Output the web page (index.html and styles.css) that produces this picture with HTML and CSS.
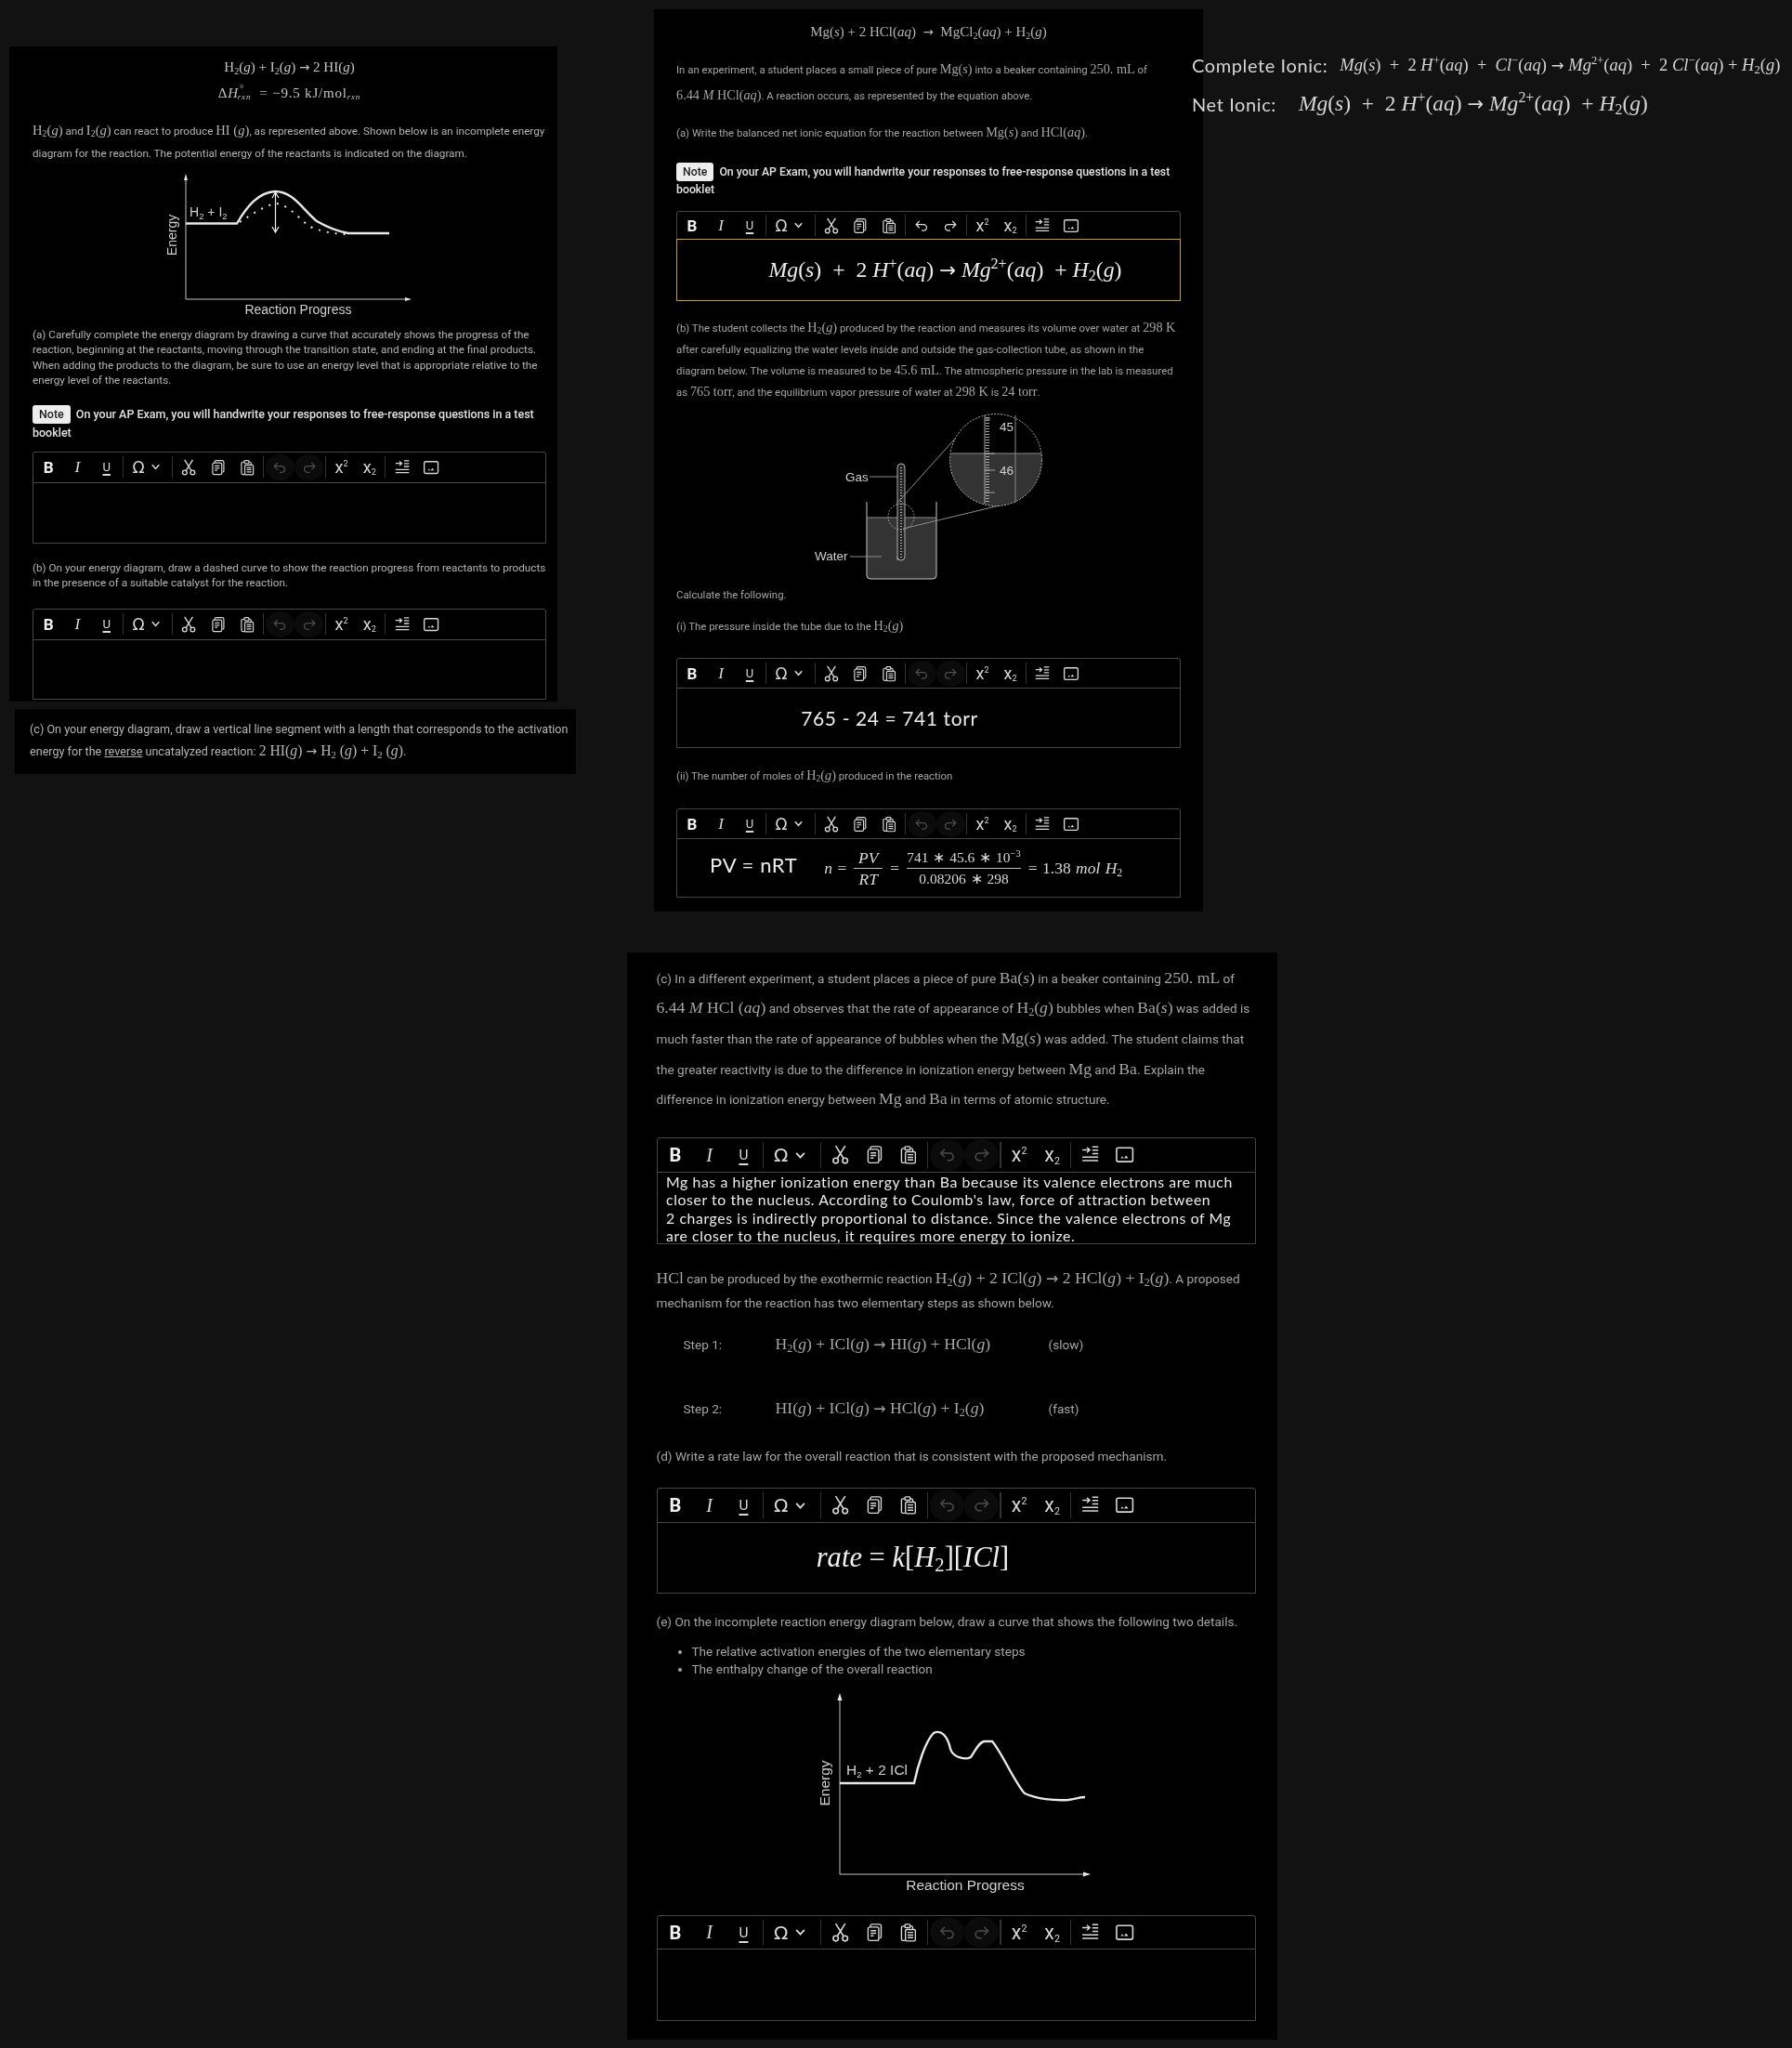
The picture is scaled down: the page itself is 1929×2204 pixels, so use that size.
FILE: index.html
```html
<!DOCTYPE html>
<html lang="en">
<head>
  <meta charset="UTF-8"/>
  <title>Free Response Notes</title>
  <link rel="stylesheet" href="styles.css">
</head>
<body>

<svg class="icon-defs" aria-hidden="true">
  <symbol id="i-chevron" viewBox="0 0 12 12"><path d="M2 3.5l4 4.5 4-4.5" fill="none" stroke="currentColor" stroke-width="1.7"/></symbol>
  <symbol id="i-cut" viewBox="0 0 20 20"><g fill="none" stroke="currentColor" stroke-width="1.5"><circle cx="5.3" cy="16" r="2.6"/><circle cx="14.7" cy="16" r="2.6"/><path d="M6.8 13.8L14.8 1M13.2 13.8L5.2 1"/></g></symbol>
  <symbol id="i-copy" viewBox="0 0 20 20"><g fill="none" stroke="currentColor" stroke-width="1.3"><rect x="3.2" y="4.6" width="10.8" height="13.6" rx="1.8"/><path d="M5.6 4.4V3.4a1.6 1.6 0 0 1 1.6-1.6h7.4a1.8 1.8 0 0 1 1.8 1.8v10.6a1.6 1.6 0 0 1-1.8 1.4"/><path d="M5.8 8.2h5.6M5.8 10.8h5.6M5.8 13.4h3"/></g></symbol>
  <symbol id="i-paste" viewBox="0 0 20 20"><g fill="none" stroke="currentColor" stroke-width="1.3"><path d="M6.6 3.6H4.8a1.6 1.6 0 0 0-1.6 1.6v11.4a1.6 1.6 0 0 0 1.6 1.6h2.4"/><path d="M12 3.6h1a1.6 1.6 0 0 1 1.6 1.6V6.8"/><rect x="6.6" y="1.8" width="5.4" height="3.4" rx="1"/><rect x="7.2" y="7" width="10" height="11.6" rx="1.4"/><path d="M9.4 10h5.6M9.4 12.6h5.6M9.4 15.2h5.6"/></g></symbol>
  <symbol id="i-undo" viewBox="0 0 20 20"><path d="M7.5 4.5L3.5 8.5l4 4M3.5 8.5h9a3.6 3.6 0 0 1 3.6 3.6v0a3.6 3.6 0 0 1-3.6 3.6H10" fill="none" stroke="currentColor" stroke-width="1.4"/></symbol>
  <symbol id="i-redo" viewBox="0 0 20 20"><path d="M12.5 4.5l4 4-4 4M16.5 8.5h-9a3.6 3.6 0 0 0-3.6 3.6v0a3.6 3.6 0 0 0 3.6 3.6H10" fill="none" stroke="currentColor" stroke-width="1.4"/></symbol>
  <symbol id="i-indent" viewBox="0 0 20 20"><g fill="none" stroke="currentColor" stroke-width="1.4"><path d="M2 5.2h7M6.6 2.6l2.8 2.6-2.8 2.6"/><path d="M12 2h6M12 5.4h6M12 8.8h6M2 12.4h16M2 16h16"/></g></symbol>
  <symbol id="i-image" viewBox="0 0 20 20"><rect x="1.8" y="3" width="16.4" height="14" rx="1.8" fill="none" stroke="currentColor" stroke-width="1.5"/><path d="M6 13.6l1.6-2 1.4 2zM9.4 13.6l2-2.8 2.2 2.8z" fill="currentColor"/></symbol>
</svg>

<main class="canvas">

  <!-- first pasted question -->
  <section class="panel panel-a">
    <div class="eq eq-a m">H<sub>2</sub>(<i>g</i>) + I<sub>2</sub>(<i>g</i>) <span class="to">→</span> 2 HI(<i>g</i>)</div>
    <div class="eq eq-a eq-dh m">Δ<i>H</i><sup class="deg">°</sup><sub class="rxn"><i>rxn</i></sub> &nbsp;= −9.5 kJ/mol<sub class="rxn after"><i>rxn</i></sub></div>

    <p class="txt a-intro"><span class="m">H<sub>2</sub>(<i>g</i>)</span> and <span class="m">I<sub>2</sub>(<i>g</i>)</span> can react to produce <span class="m">HI (<i>g</i>)</span>, as represented above. Shown below is an incomplete energy<br>diagram for the reaction. The potential energy of the reactants is indicated on the diagram.</p>

    <svg class="diagram a-diagram" viewBox="35 182 553 160">
      <g class="axis">
        <path d="M200 192V322H438"/>
        <path class="head" d="M200 187l-2 7h4zM443 322l-7-2v4z"/>
      </g>
      <path class="curve" d="M200 240.5H255C266 222 278 207 296 206C316 206 326 226 341 238C353 245 364 249 375 251H419"/>
      <path class="dots" d="M258 239C272 230 284 222 296 219C310 219 322 236 334 244C348 250 362 252 375 252"/>
      <path class="arrow" d="M296.500 207V250M293 213l3.500-6 3.500 6M293 244l3.500 6 3.500-6"/>
      <text class="lbl" x="204" y="233">H<tspan class="idx" dy="3">2</tspan><tspan dy="-3"> + I</tspan><tspan class="idx" dy="3">2</tspan></text>
      <text class="lbl" transform="translate(190 253) rotate(-90)" text-anchor="middle">Energy</text>
      <text class="lbl" x="321" y="338" text-anchor="middle">Reaction Progress</text>
    </svg>

    <p class="txt a-part-a">(a) Carefully complete the energy diagram by drawing a curve that accurately shows the progress of the<br>reaction, beginning at the reactants, moving through the transition state, and ending at the final products.<br>When adding the products to the diagram, be sure to use an energy level that is appropriate relative to the<br>energy level of the reactants.</p>

    <p class="note a-note"><span class="note-tag">Note</span>On your AP Exam, you will handwrite your responses to free-response questions in a test booklet</p>

    <div class="editor a-ed1">
      <div class="toolbar">
        <span class="tool bold">B</span><span class="tool ital">I</span><span class="tool under">U</span><span class="sep"></span>
        <span class="tool special">Ω<svg class="chev"><use href="#i-chevron"/></svg></span><span class="sep"></span>
        <span class="tool"><svg><use href="#i-cut"/></svg></span><span class="tool"><svg><use href="#i-copy"/></svg></span><span class="tool"><svg><use href="#i-paste"/></svg></span><span class="sep"></span>
        <span class="tool off"><svg><use href="#i-undo"/></svg></span><span class="tool off"><svg><use href="#i-redo"/></svg></span><span class="sep"></span>
        <span class="tool script"><span>x<sup>2</sup></span></span><span class="tool script"><span>x<sub>2</sub></span></span><span class="sep"></span>
        <span class="tool"><svg><use href="#i-indent"/></svg></span><span class="tool"><svg><use href="#i-image"/></svg></span>
      </div>
      <div class="answer"></div>
    </div>

    <p class="txt a-part-b">(b) On your energy diagram, draw a dashed curve to show the reaction progress from reactants to products<br>in the presence of a suitable catalyst for the reaction.</p>

    <div class="editor a-ed2">
      <div class="toolbar">
        <span class="tool bold">B</span><span class="tool ital">I</span><span class="tool under">U</span><span class="sep"></span>
        <span class="tool special">Ω<svg class="chev"><use href="#i-chevron"/></svg></span><span class="sep"></span>
        <span class="tool"><svg><use href="#i-cut"/></svg></span><span class="tool"><svg><use href="#i-copy"/></svg></span><span class="tool"><svg><use href="#i-paste"/></svg></span><span class="sep"></span>
        <span class="tool off"><svg><use href="#i-undo"/></svg></span><span class="tool off"><svg><use href="#i-redo"/></svg></span><span class="sep"></span>
        <span class="tool script"><span>x<sup>2</sup></span></span><span class="tool script"><span>x<sub>2</sub></span></span><span class="sep"></span>
        <span class="tool"><svg><use href="#i-indent"/></svg></span><span class="tool"><svg><use href="#i-image"/></svg></span>
      </div>
      <div class="answer"></div>
    </div>
  </section>

  <section class="panel panel-a2">
    <p class="txt">(c) On your energy diagram, draw a vertical line segment with a length that corresponds to the activation<br>energy for the <u>reverse</u> uncatalyzed reaction: <span class="m">2 HI(<i>g</i>) <span class="to">→</span> H<sub>2</sub> (<i>g</i>) + I<sub>2</sub> (<i>g</i>)</span>.</p>
  </section>

  <!-- second pasted question -->
  <section class="panel panel-b">
    <div class="eq b-eq m">Mg(<i>s</i>) + 2 HCl(<i>aq</i>) &nbsp;<span class="to">→</span>&nbsp; MgCl<sub>2</sub>(<i>aq</i>) + H<sub>2</sub>(<i>g</i>)</div>

    <p class="txt b-intro">In an experiment, a student places a small piece of pure <span class="m">Mg(<i>s</i>)</span> into a beaker containing <span class="m">250. mL</span> of<br><span class="m">6.44 <i>M</i> HCl(<i>aq</i>)</span>. A reaction occurs, as represented by the equation above.</p>

    <p class="txt b-part-a">(a) Write the balanced net ionic equation for the reaction between <span class="m">Mg(<i>s</i>)</span> and <span class="m">HCl(<i>aq</i>)</span>.</p>

    <p class="note b-note"><span class="note-tag">Note</span>On your AP Exam, you will handwrite your responses to free-response questions in a test booklet</p>

    <div class="editor b-ed1 focused">
      <div class="toolbar">
        <span class="tool bold">B</span><span class="tool ital">I</span><span class="tool under">U</span><span class="sep"></span>
        <span class="tool special">Ω<svg class="chev"><use href="#i-chevron"/></svg></span><span class="sep"></span>
        <span class="tool"><svg><use href="#i-cut"/></svg></span><span class="tool"><svg><use href="#i-copy"/></svg></span><span class="tool"><svg><use href="#i-paste"/></svg></span><span class="sep"></span>
        <span class="tool"><svg><use href="#i-undo"/></svg></span><span class="tool"><svg><use href="#i-redo"/></svg></span><span class="sep"></span>
        <span class="tool script"><span>x<sup>2</sup></span></span><span class="tool script"><span>x<sub>2</sub></span></span><span class="sep"></span>
        <span class="tool"><svg><use href="#i-indent"/></svg></span><span class="tool"><svg><use href="#i-image"/></svg></span>
      </div>
      <div class="answer ans-net"><span class="m"><i>Mg</i>(<i>s</i>) &nbsp;+ &nbsp;2 <i>H</i><sup>+</sup>(<i>aq</i>) <span class="to">→</span> <i>Mg</i><sup>2+</sup>(<i>aq</i>) &nbsp;+ <i>H</i><sub>2</sub>(<i>g</i>)</span></div>
    </div>

    <p class="txt b-part-b">(b) The student collects the <span class="m">H<sub>2</sub>(<i>g</i>)</span> produced by the reaction and measures its volume over water at <span class="m">298 K</span><br>after carefully equalizing the water levels inside and outside the gas-collection tube, as shown in the<br>diagram below. The volume is measured to be <span class="m">45.6 mL</span>. The atmospheric pressure in the lab is measured<br>as <span class="m">765 torr</span>, and the equilibrium vapor pressure of water at <span class="m">298 K</span> is <span class="m">24 torr</span>.</p>

    <svg class="diagram b-diagram" viewBox="728 433 543 194">
      <path class="water" d="M933 556H1008V618a4 4 0 0 1-4 4H937a4 4 0 0 1-4-4z"/>
      <path class="glass" d="M933 539V618a4 4 0 0 0 4 4H1004a4 4 0 0 0 4-4V539"/>
      <path class="thin" d="M933 556H1008M915 598H949M936 512H966"/>
      <path class="tube" d="M966 602V502a4 4 0 0 1 8 0V598a4 4 0 0 1-8 0"/>
      <path class="ticks" d="M970 502V600"/>
      <circle class="lens" cx="970" cy="555" r="14"/>
      <path class="thin" d="M966 540L1029 470M972 568L1076 543"/>
      <path class="water" d="M1023 487H1121A49.500 49.500 0 1 1 1023 487z"/>
      <circle class="lens big" cx="1072" cy="494" r="49.500"/>
      <path class="thin" d="M1024 487H1121M1093 446V540"/>
      <path class="scale" d="M1060 446V541M1060 450h6M1060 487h11M1060 505h11M1060 529h11"/>
      <path class="ticks wide" d="M1063 448V540"/>
      <text class="lbl" x="1076" y="463">45</text>
      <text class="lbl" x="1076" y="510">46</text>
      <text class="lbl" x="910" y="517">Gas</text>
      <text class="lbl" x="877" y="602">Water</text>
    </svg>

    <p class="txt b-calc">Calculate the following.</p>
    <p class="txt b-sub-i">(i) The pressure inside the tube due to the <span class="m">H<sub>2</sub>(<i>g</i>)</span></p>

    <div class="editor b-ed2">
      <div class="toolbar">
        <span class="tool bold">B</span><span class="tool ital">I</span><span class="tool under">U</span><span class="sep"></span>
        <span class="tool special">Ω<svg class="chev"><use href="#i-chevron"/></svg></span><span class="sep"></span>
        <span class="tool"><svg><use href="#i-cut"/></svg></span><span class="tool"><svg><use href="#i-copy"/></svg></span><span class="tool"><svg><use href="#i-paste"/></svg></span><span class="sep"></span>
        <span class="tool off"><svg><use href="#i-undo"/></svg></span><span class="tool off"><svg><use href="#i-redo"/></svg></span><span class="sep"></span>
        <span class="tool script"><span>x<sup>2</sup></span></span><span class="tool script"><span>x<sub>2</sub></span></span><span class="sep"></span>
        <span class="tool"><svg><use href="#i-indent"/></svg></span><span class="tool"><svg><use href="#i-image"/></svg></span>
      </div>
      <div class="answer ans-torr hand">765 - 24 = 741 torr</div>
    </div>

    <p class="txt b-sub-ii">(ii) The number of moles of <span class="m">H<sub>2</sub>(<i>g</i>)</span> produced in the reaction</p>

    <div class="editor b-ed3">
      <div class="toolbar">
        <span class="tool bold">B</span><span class="tool ital">I</span><span class="tool under">U</span><span class="sep"></span>
        <span class="tool special">Ω<svg class="chev"><use href="#i-chevron"/></svg></span><span class="sep"></span>
        <span class="tool"><svg><use href="#i-cut"/></svg></span><span class="tool"><svg><use href="#i-copy"/></svg></span><span class="tool"><svg><use href="#i-paste"/></svg></span><span class="sep"></span>
        <span class="tool off"><svg><use href="#i-undo"/></svg></span><span class="tool off"><svg><use href="#i-redo"/></svg></span><span class="sep"></span>
        <span class="tool script"><span>x<sup>2</sup></span></span><span class="tool script"><span>x<sub>2</sub></span></span><span class="sep"></span>
        <span class="tool"><svg><use href="#i-indent"/></svg></span><span class="tool"><svg><use href="#i-image"/></svg></span>
      </div>
      <div class="answer ans-moles">
        <span class="hand pv">PV = nRT</span>
        <div class="calc">
          <span><i>n</i> =</span>
          <span class="frac"><span class="num"><i>PV</i></span><span><i>RT</i></span></span>
          <span>=</span>
          <span class="frac small"><span class="num">741 ∗ 45.6 ∗ 10<sup>−3</sup></span><span>0.08206 ∗ 298</span></span>
          <span>= 1.38 <i>mol H</i><sub>2</sub></span>
        </div>
      </div>
    </div>
  </section>

  <!-- handwritten note next to question two -->
  <section class="ionic">
    <div class="ionic-row"><span class="hand ionic-name">Complete Ionic:</span><span class="m ionic-full"><i>Mg</i>(<i>s</i>) &nbsp;+ &nbsp;2 <i>H</i><sup>+</sup>(<i>aq</i>) &nbsp;+ &nbsp;<i>Cl</i><sup>−</sup>(<i>aq</i>) <span class="to">→</span> <i>Mg</i><sup>2+</sup>(<i>aq</i>) &nbsp;+ &nbsp;2 <i>Cl</i><sup>−</sup>(<i>aq</i>) + <i>H</i><sub>2</sub>(<i>g</i>)</span></div>
    <div class="ionic-row"><span class="hand ionic-name net">Net Ionic:</span><span class="m ionic-net"><i>Mg</i>(<i>s</i>) &nbsp;+ &nbsp;2 <i>H</i><sup>+</sup>(<i>aq</i>) <span class="to">→</span> <i>Mg</i><sup>2+</sup>(<i>aq</i>) &nbsp;+ <i>H</i><sub>2</sub>(<i>g</i>)</span></div>
  </section>

  <!-- third pasted question -->
  <section class="panel panel-c">
    <p class="txt c-part-c">(c) In a different experiment, a student places a piece of pure <span class="m">Ba(<i>s</i>)</span> in a beaker containing <span class="m">250. mL</span> of<br><span class="m">6.44 <i>M</i> HCl (<i>aq</i>)</span> and observes that the rate of appearance of <span class="m">H<sub>2</sub>(<i>g</i>)</span> bubbles when <span class="m">Ba(<i>s</i>)</span> was added is<br>much faster than the rate of appearance of bubbles when the <span class="m">Mg(<i>s</i>)</span> was added. The student claims that<br>the greater reactivity is due to the difference in ionization energy between <span class="m">Mg</span> and <span class="m">Ba</span>. Explain the<br>difference in ionization energy between <span class="m">Mg</span> and <span class="m">Ba</span> in terms of atomic structure.</p>

    <div class="editor c-ed1 big">
      <div class="toolbar">
        <span class="tool bold">B</span><span class="tool ital">I</span><span class="tool under">U</span><span class="sep"></span>
        <span class="tool special">Ω<svg class="chev"><use href="#i-chevron"/></svg></span><span class="sep"></span>
        <span class="tool"><svg><use href="#i-cut"/></svg></span><span class="tool"><svg><use href="#i-copy"/></svg></span><span class="tool"><svg><use href="#i-paste"/></svg></span><span class="sep"></span>
        <span class="tool off"><svg><use href="#i-undo"/></svg></span><span class="tool off"><svg><use href="#i-redo"/></svg></span><span class="sep"></span>
        <span class="tool script"><span>x<sup>2</sup></span></span><span class="tool script"><span>x<sub>2</sub></span></span><span class="sep"></span>
        <span class="tool"><svg><use href="#i-indent"/></svg></span><span class="tool"><svg><use href="#i-image"/></svg></span>
      </div>
      <div class="answer ans-long hand">Mg has a higher ionization energy than Ba because its valence electrons are much<br>closer to the nucleus. According to Coulomb's law, force of attraction between<br>2 charges is indirectly proportional to distance. Since the valence electrons of Mg<br>are closer to the nucleus, it requires more energy to ionize.</div>
    </div>

    <p class="txt c-mech"><span class="m">HCl</span> can be produced by the exothermic reaction <span class="m">H<sub>2</sub>(<i>g</i>) + 2 ICl(<i>g</i>) <span class="to">→</span> 2 HCl(<i>g</i>) + I<sub>2</sub>(<i>g</i>)</span>. A proposed<br>mechanism for the reaction has two elementary steps as shown below.</p>

    <div class="step step-1 txt"><span>Step 1:</span><span class="m">H<sub>2</sub>(<i>g</i>) + ICl(<i>g</i>) <span class="to">→</span> HI(<i>g</i>) + HCl(<i>g</i>)</span><span>(slow)</span></div>
    <div class="step step-2 txt"><span>Step 2:</span><span class="m">HI(<i>g</i>) + ICl(<i>g</i>) <span class="to">→</span> HCl(<i>g</i>) + I<sub>2</sub>(<i>g</i>)</span><span>(fast)</span></div>

    <p class="txt c-part-d">(d) Write a rate law for the overall reaction that is consistent with the proposed mechanism.</p>

    <div class="editor c-ed2 big">
      <div class="toolbar">
        <span class="tool bold">B</span><span class="tool ital">I</span><span class="tool under">U</span><span class="sep"></span>
        <span class="tool special">Ω<svg class="chev"><use href="#i-chevron"/></svg></span><span class="sep"></span>
        <span class="tool"><svg><use href="#i-cut"/></svg></span><span class="tool"><svg><use href="#i-copy"/></svg></span><span class="tool"><svg><use href="#i-paste"/></svg></span><span class="sep"></span>
        <span class="tool off"><svg><use href="#i-undo"/></svg></span><span class="tool off"><svg><use href="#i-redo"/></svg></span><span class="sep"></span>
        <span class="tool script"><span>x<sup>2</sup></span></span><span class="tool script"><span>x<sub>2</sub></span></span><span class="sep"></span>
        <span class="tool"><svg><use href="#i-indent"/></svg></span><span class="tool"><svg><use href="#i-image"/></svg></span>
      </div>
      <div class="answer ans-rate"><span class="m"><i>rate</i> = <i>k</i>[<i>H</i><sub>2</sub>][<i>ICl</i>]</span></div>
    </div>

    <p class="txt c-part-e">(e) On the incomplete reaction energy diagram below, draw a curve that shows the following two details.</p>

    <ul class="txt c-list">
      <li>The relative activation energies of the two elementary steps</li>
      <li>The enthalpy change of the overall reaction</li>
    </ul>

    <svg class="diagram c-diagram" viewBox="707 1806 645 234">
      <g class="axis">
        <path d="M904 1826V2017H1168"/>
        <path class="head" d="M904 1822l-2.500 8h5zM1174 2017l-8-2.500v5z"/>
      </g>
      <path class="curve" d="M904 1919H984C988 1900 996 1874 1005 1865C1013 1861 1020 1868 1023 1882C1026 1892 1040 1894 1045 1891C1050 1884 1054 1874 1060 1874H1068C1078 1885 1092 1918 1103 1930C1116 1936 1135 1938 1150 1937C1158 1936 1162 1934 1168 1934"/>
      <text class="lbl" x="911" y="1910">H<tspan class="idx" dy="3">2</tspan><tspan dy="-3"> + 2 ICl</tspan></text>
      <text class="lbl" transform="translate(893 1919) rotate(-90)" text-anchor="middle">Energy</text>
      <text class="lbl" x="1039" y="2034" text-anchor="middle">Reaction Progress</text>
    </svg>

    <div class="editor c-ed3 big">
      <div class="toolbar">
        <span class="tool bold">B</span><span class="tool ital">I</span><span class="tool under">U</span><span class="sep"></span>
        <span class="tool special">Ω<svg class="chev"><use href="#i-chevron"/></svg></span><span class="sep"></span>
        <span class="tool"><svg><use href="#i-cut"/></svg></span><span class="tool"><svg><use href="#i-copy"/></svg></span><span class="tool"><svg><use href="#i-paste"/></svg></span><span class="sep"></span>
        <span class="tool off"><svg><use href="#i-undo"/></svg></span><span class="tool off"><svg><use href="#i-redo"/></svg></span><span class="sep"></span>
        <span class="tool script"><span>x<sup>2</sup></span></span><span class="tool script"><span>x<sub>2</sub></span></span><span class="sep"></span>
        <span class="tool"><svg><use href="#i-indent"/></svg></span><span class="tool"><svg><use href="#i-image"/></svg></span>
      </div>
      <div class="answer"></div>
    </div>
  </section>

</main>

</body>
</html>
```

FILE: styles.css
```css
* {
  box-sizing: border-box;
}

body {
  margin: 0;
  background-color: #121212;
  font-family: 'Roboto', sans-serif;
  color: #b4b4b4;
}

p, ul {
  margin: 0;
}

.icon-defs {
  display: none;
}

.canvas {
  position: relative;
  width: 1929px;
  height: 2204px;
  overflow: hidden;
}

/* pasted pieces sit freely on the canvas */
.panel {
  position: absolute;
  background-color: #000;
  filter: blur(0.35px);
}

.panel-a {
  left: 10px;
  top: 50px;
  width: 590px;
  height: 705px;
  padding: 8px 12px 0 25px;
  font-size: 12.5px;
}

.panel-a .txt {
  font-size: 11.7px;
}

.panel-a .toolbar {
  zoom: 1.01;
}

.panel-a2 {
  left: 16px;
  top: 763px;
  width: 604px;
  height: 70px;
  padding: 10px 10px 0 16px;
  line-height: 24px;
}

.panel-a2 .txt {
  font-size: 12.6px;
}

.panel-b {
  left: 704px;
  top: 10px;
  width: 591px;
  height: 971px;
  padding: 10px 24px 0;
  font-size: 12.3px;
  color: #a4a4a4;
}

.panel-b .txt {
  font-size: 11.4px;
}

.panel-c {
  left: 675px;
  top: 1025px;
  width: 700px;
  height: 1170px;
  padding: 11.65px 23px 0 32px;
  font-size: 13.6px;
  color: #a4a4a4;
}

.panel-c .m {
  font-size: 1.3em;
}

.panel-c .txt {
  margin-left: -0.5px;
}

.panel-c .editor {
  margin-left: 0;
}

.txt {
  white-space: nowrap;
}

/* math */
.m {
  font-family: 'Liberation Serif', serif;
  font-size: 1.25em;
}

span.m {
  line-height: 1;
}

.to {
  font-family: 'DejaVu Sans', sans-serif;
  font-size: 0.9em;
}

sub, sup {
  font-size: 0.68em;
  line-height: 0;
}

sub {
  vertical-align: -0.25em;
}

sub.rxn {
  margin-left: -7px;
  font-size: 0.6em;
}

sub.rxn.after {
  margin-left: 0;
}

sup.deg {
  margin-left: 1px;
}

.eq {
  text-align: center;
  line-height: 28px;
  color: #c4c4c4;
}

.eq-a {
  font-size: 15px;
}

.eq-dh {
  letter-spacing: 0.8px;
}

.b-eq {
  font-size: 15px;
  color: #b4b4b4;
}

/* panel a rhythm */
.a-intro { margin-top: 15px; line-height: 24px; }
.a-diagram { margin-top: 5px; height: 160px; }
.a-part-a { margin-top: 10px; line-height: 16.3px; }
.a-note { margin-top: 19px; line-height: 20px; }
.a-ed1 { margin-top: 10px; height: 99px; }
.a-part-b { margin-top: 18px; line-height: 16px; }
.a-ed2 { margin-top: 20px; height: 98px; }

/* panel b rhythm */
.b-intro { margin-top: 13px; line-height: 28px; }
.b-part-a { margin-top: 14px; line-height: 24px; }
.b-note { margin-top: 20px; line-height: 18px; }
.b-ed1 { margin-top: 14px; height: 97px; }
.b-part-b { margin-top: 18px; line-height: 23px; }
.b-diagram { height: 194px; }
.b-calc { margin-top: 3px; line-height: 18px; }
.b-sub-i { margin-top: 16px; line-height: 18px; }
.b-ed2 { margin-top: 25px; height: 97px; }
.b-sub-ii { margin-top: 21px; line-height: 18px; }
.b-ed3 { margin-top: 26px; height: 96px; }

/* panel c rhythm */
.c-part-c { line-height: 32.7px; }
.c-ed1 { margin-top: 24px; height: 115px; }
.c-mech { margin-top: 24px; line-height: 26px; }
.step {
  display: grid;
  grid-template-columns: 99px 294px auto;
  align-items: baseline;
  padding-left: 29px;
  line-height: 24px;
}
.step-1 { margin-top: 20px; }
.step-2 { margin-top: 45px; }
.c-part-d { margin-top: 29px; line-height: 20px; }
.c-ed2 { margin-top: 24px; height: 114px; }
.c-part-e { margin-top: 20px; line-height: 20px; }
.c-list {
  margin-top: 12.5px;
  padding-left: 38px;
  line-height: 19px;
}
.c-diagram { height: 234px; }
.c-ed3 { margin-top: 21px; height: 114px; }

/* note strip */
.note {
  color: #e2e2e2;
  font-weight: 500;
}

.note-tag {
  display: inline-block;
  margin-right: 6px;
  padding: 0 7px;
  background-color: #ededed;
  color: #1e1e1e;
  border-radius: 3px;
  line-height: 20px;
}

/* response editor */
.editor {
  display: flex;
  flex-direction: column;
  border: 1px solid #474747;
  border-radius: 3px 3px 0 0;
}

.editor.focused .toolbar {
  height: 30px;
}

.editor.focused .answer {
  margin: -1px;
  border: 1px solid #c4a11f;
}

.panel-c .editor.big .toolbar {
  zoom: 1.185;
  height: 31px;
}

.toolbar {
  display: flex;
  flex: none;
  align-items: center;
  height: 32px;
  border-bottom: 1px solid #474747;
  color: #d8d8d8;
  font-size: 15px;
}

.tool {
  display: flex;
  flex: none;
  align-items: center;
  justify-content: center;
  width: 31px;
  height: 28px;
  font-family: 'Roboto', sans-serif;
}

.tool:first-child {
  margin-left: 0.5px;
}

.tool svg {
  width: 18px;
  height: 18px;
}

.tool.off {
  color: #4c4c4c;
  background-color: #0b0b0b;
  border-radius: 50%;
}

.bold {
  font-size: 17px;
  font-weight: 700;
  color: #f0f0f0;
}

.ital {
  font-family: 'Liberation Serif', serif;
  font-size: 17px;
  font-style: italic;
}

.under {
  font-size: 13px;
  text-decoration: underline;
  text-underline-offset: 3px;
  text-decoration-thickness: 1.5px;
}

.special {
  justify-content: flex-start;
  gap: 6px;
  width: 49px;
  padding-left: 8px;
  font-family: 'DejaVu Sans', sans-serif;
  font-size: 17px;
}

.special .chev {
  width: 11px;
  height: 11px;
}

.script {
  width: 30px;
  font-size: 18px;
  line-height: 1;
}

.script sup,
.script sub {
  font-size: 9px;
}

.sep {
  flex: none;
  width: 1px;
  height: 23px;
  margin: 0 1.5px;
  background-color: #333;
}

.answer {
  flex: 1;
  display: flex;
  align-items: center;
  justify-content: center;
  color: #ececec;
}

.ans-net {
  padding-left: 36px;
  font-size: 19px;
}

.ans-torr {
  padding-right: 84px;
  font-size: 21px;
}

.ans-moles {
  justify-content: flex-start;
  gap: 29px;
  padding-left: 35px;
}

.pv {
  margin-top: -8px;
  font-size: 22px;
}

.calc {
  display: flex;
  align-items: center;
  gap: 8px;
  color: #d8d8d8;
  font-family: 'Liberation Serif', serif;
  font-size: 17.5px;
  word-spacing: 1px;
}

.frac {
  display: inline-flex;
  flex-direction: column;
  align-items: center;
  min-width: 31px;
  line-height: 22px;
}

.frac.small {
  font-size: 15.5px;
}

.frac .num {
  align-self: stretch;
  text-align: center;
  border-bottom: 1px solid #bbb;
}

.ans-rate {
  padding-right: 94px;
  font-size: 23.500px;
  color: #f0f0f0;
}

.ans-long {
  display: block;
  padding: 0 9px;
  font-size: 15.800px;
  line-height: 19.500px;
}

/* hand lettered bits */
.hand {
  font-family: 'Lato', sans-serif;
  letter-spacing: 0.6px;
}

.ionic {
  position: absolute;
  left: 1283px;
  top: 49px;
  color: #d6d6d6;
  filter: blur(0.35px);
}

.ionic-row {
  display: flex;
  align-items: center;
  height: 42px;
  white-space: nowrap;
}

.ionic-name {
  font-size: 20px;
}

.ionic-full {
  margin-left: 13px;
  font-size: 18.500px;
}

.ionic-net {
  margin-left: 24px;
  font-size: 23.500px;
}

/* figures */
.diagram {
  display: block;
  width: 100%;
}

.axis path {
  fill: none;
  stroke: #c4c4c4;
  stroke-width: 1;
}

.axis .head {
  fill: #e8e8e8;
  stroke: none;
}

.curve {
  fill: none;
  stroke: #e8e8e8;
  stroke-width: 2.400;
}

.dots {
  fill: none;
  stroke: #e8e8e8;
  stroke-width: 2;
  stroke-dasharray: 2 7;
}

.arrow {
  fill: none;
  stroke: #f0f0f0;
  stroke-width: 1.2;
}

.lbl {
  font-family: 'Liberation Sans', sans-serif;
  font-size: 13.5px;
  fill: #d0d0d0;
}

.a-diagram .lbl {
  font-size: 14px;
}

.c-diagram .lbl {
  font-size: 15.500px;
}

.idx {
  font-size: 9.5px;
}

.water {
  fill: #333;
}

.glass {
  fill: none;
  stroke: #c8c8c8;
  stroke-width: 1;
}

.thin {
  fill: none;
  stroke: #8c8c8c;
  stroke-width: 1;
}

.tube {
  fill: #222;
  stroke: #b0b0b0;
  stroke-width: 1;
}

.ticks {
  fill: none;
  stroke: #aaa;
  stroke-width: 2;
  stroke-dasharray: 1 2;
}

.ticks.wide {
  stroke-width: 4;
}

.lens {
  fill: none;
  stroke: #b8b8b8;
  stroke-width: 0.8;
  stroke-dasharray: 2 1.5;
}

.lens.big {
  stroke-width: 1;
}

.scale {
  fill: none;
  stroke: #a8a8a8;
  stroke-width: 1;
}
```
